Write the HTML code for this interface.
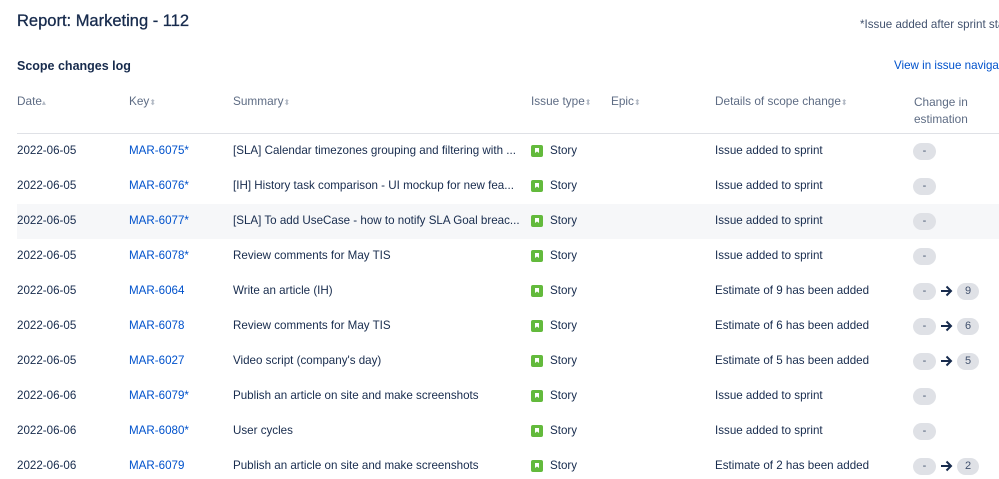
<!DOCTYPE html>
<html><head><style>
body{margin:0;width:999px;height:479px;overflow:hidden;background:#fff;font-family:"Liberation Sans",sans-serif;color:#172b4d;font-size:11.6px;position:relative}
.a{position:absolute;white-space:nowrap}
h1{position:absolute;left:17px;top:12px;margin:0;font-size:16.5px;font-weight:normal;-webkit-text-stroke:0.3px #172b4d}
.h{color:#5e6c84;font-size:11.8px}
.s{color:#b3bac5;font-size:8px}
.k{color:#0052cc}
.row{position:absolute;left:17px;width:982px;height:35px}
.ic{position:absolute;width:12px;height:12px;background:#63ba3c;border-radius:2px}
.ic:after{content:"";position:absolute;left:4px;top:3px;width:4px;height:5px;background:#fff;clip-path:polygon(0 0,100% 0,100% 100%,50% 70%,0 100%)}
.p{position:absolute;height:17px;line-height:17px;border-radius:9px;background:#dfe1e6;text-align:center;font-size:11px;color:#42526e}
</style></head><body>
<h1>Report: Marketing - 112</h1>
<div class="a" style="left:860px;top:18px;color:#42526e">*Issue added after sprint start</div>
<div class="a" style="left:17px;top:59px;font-weight:bold;font-size:12.5px">Scope changes log</div>
<div class="a k" style="left:894px;top:59px">View in issue navigator</div>
<div class="a h" style="left:17px;top:94px">Date<span class="s">▴</span></div>
<div class="a h" style="left:129px;top:94px">Key<span class="s">⬍</span></div>
<div class="a h" style="left:233px;top:94px">Summary<span class="s">⬍</span></div>
<div class="a h" style="left:531px;top:94px">Issue type<span class="s">⬍</span></div>
<div class="a h" style="left:611px;top:94px">Epic<span class="s">⬍</span></div>
<div class="a h" style="left:715px;top:94px">Details of scope change<span class="s">⬍</span></div>
<div class="a h" style="left:914px;top:94px;line-height:17px;white-space:normal">Change in<br>estimation</div>
<div class="a" style="left:17px;top:133px;width:982px;height:1px;background:#dfe1e6"></div>
<div id="rows"></div>
<script>
var d=[["2022-06-05","MAR-6075*","[SLA] Calendar timezones grouping and filtering with ...","Issue added to sprint",""],
["2022-06-05","MAR-6076*","[IH] History task comparison - UI mockup for new fea...","Issue added to sprint",""],
["2022-06-05","MAR-6077*","[SLA] To add UseCase - how to notify SLA Goal breac...","Issue added to sprint",""],
["2022-06-05","MAR-6078*","Review comments for May TIS","Issue added to sprint",""],
["2022-06-05","MAR-6064","Write an article (IH)","Estimate of 9 has been added","9"],
["2022-06-05","MAR-6078","Review comments for May TIS","Estimate of 6 has been added","6"],
["2022-06-05","MAR-6027","Video script (company's day)","Estimate of 5 has been added","5"],
["2022-06-06","MAR-6079*","Publish an article on site and make screenshots","Issue added to sprint",""],
["2022-06-06","MAR-6080*","User cycles","Issue added to sprint",""],
["2022-06-06","MAR-6079","Publish an article on site and make screenshots","Estimate of 2 has been added","2"]];
var h="";
d.forEach(function(r,i){var y=134+i*35;var t=y+10;
if(i==2)h+='<div class="row" style="top:'+y+'px;background:#f6f7f9"></div>';
h+='<div class="a" style="left:17px;top:'+t+'px">'+r[0]+'</div>';
h+='<div class="a k" style="left:129px;top:'+t+'px">'+r[1]+'</div>';
h+='<div class="a" style="left:233px;top:'+t+'px">'+r[2]+'</div>';
h+='<div class="ic" style="left:531px;top:'+(y+11)+'px"></div>';
h+='<div class="a" style="left:550px;top:'+t+'px">Story</div>';
h+='<div class="a" style="left:715px;top:'+t+'px">'+r[3]+'</div>';
h+='<div class="p" style="left:913px;top:'+(y+9)+'px;width:23px">-</div>';
if(r[4]){h+='<svg class="a" style="left:940px;top:'+(y+11)+'px" width="13" height="12" viewBox="0 0 13 12"><path d="M1 6H11M6.5 1.5L11 6L6.5 10.5" stroke="#172b4d" stroke-width="2" fill="none"/></svg>';
h+='<div class="p" style="left:957px;top:'+(y+9)+'px;width:22px">'+r[4]+'</div>';}
});
document.getElementById("rows").innerHTML=h;
</script>
</body></html>
